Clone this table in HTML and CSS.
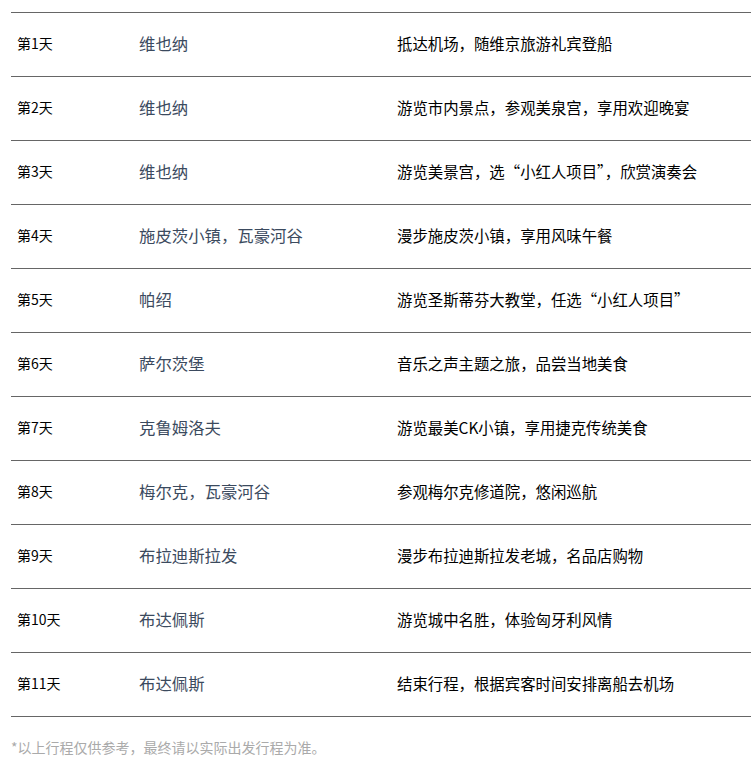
FILE: index.html
```html
<!DOCTYPE html>
<html lang="zh-CN">
<head>
<meta charset="utf-8">
<title>行程</title>
<link rel="stylesheet" href="styles.css">
</head>
<body>
<div class="itinerary">
  <div class="row"><div class="day">第1天</div><div class="place">维也纳</div><div class="desc">抵达机场，随维京旅游礼宾登船</div></div>
  <div class="row"><div class="day">第2天</div><div class="place">维也纳</div><div class="desc">游览市内景点，参观美泉宫，享用欢迎晚宴</div></div>
  <div class="row"><div class="day">第3天</div><div class="place">维也纳</div><div class="desc">游览美景宫，选“小红人项目”，欣赏演奏会</div></div>
  <div class="row"><div class="day">第4天</div><div class="place">施皮茨小镇，瓦豪河谷</div><div class="desc">漫步施皮茨小镇，享用风味午餐</div></div>
  <div class="row"><div class="day">第5天</div><div class="place">帕绍</div><div class="desc">游览圣斯蒂芬大教堂，任选“小红人项目”</div></div>
  <div class="row"><div class="day">第6天</div><div class="place">萨尔茨堡</div><div class="desc">音乐之声主题之旅，品尝当地美食</div></div>
  <div class="row"><div class="day">第7天</div><div class="place">克鲁姆洛夫</div><div class="desc">游览最美CK小镇，享用捷克传统美食</div></div>
  <div class="row"><div class="day">第8天</div><div class="place">梅尔克，瓦豪河谷</div><div class="desc">参观梅尔克修道院，悠闲巡航</div></div>
  <div class="row"><div class="day">第9天</div><div class="place">布拉迪斯拉发</div><div class="desc">漫步布拉迪斯拉发老城，名品店购物</div></div>
  <div class="row"><div class="day">第10天</div><div class="place">布达佩斯</div><div class="desc">游览城中名胜，体验匈牙利风情</div></div>
  <div class="row"><div class="day">第11天</div><div class="place">布达佩斯</div><div class="desc">结束行程，根据宾客时间安排离船去机场</div></div>
</div>
<p class="note">*以上行程仅供参考，最终请以实际出发行程为准。</p>
</body>
</html>
```

FILE: styles.css
```css
html, body {
  margin: 0;
  padding: 0;
  background: #fff;
}
body {
  font-family: "Noto Sans CJK SC", "Noto Sans", sans-serif;
  color: #000;
  overflow: hidden;
}
.itinerary {
  margin: 12px 0 0 11px;
  border-bottom: 1px solid #666;
}
.row {
  display: grid;
  grid-template-columns: 122px 258px 1fr;
  align-items: center;
  height: 63px;
  border-top: 1px solid #666;
}
.row > div {
  padding: 0 0 3px 6px;
  white-space: nowrap;
}
.day {
  font-size: 14px;
  color: #000;
}
.place {
  font-size: 16.4px;
  color: #3b4a5e;
}
.desc {
  font-size: 15.4px;
  color: #000;
}
.note {
  margin: 20px 0 0 11px;
  font-size: 14px;
  line-height: 20px;
  color: #aaa;
}
```
